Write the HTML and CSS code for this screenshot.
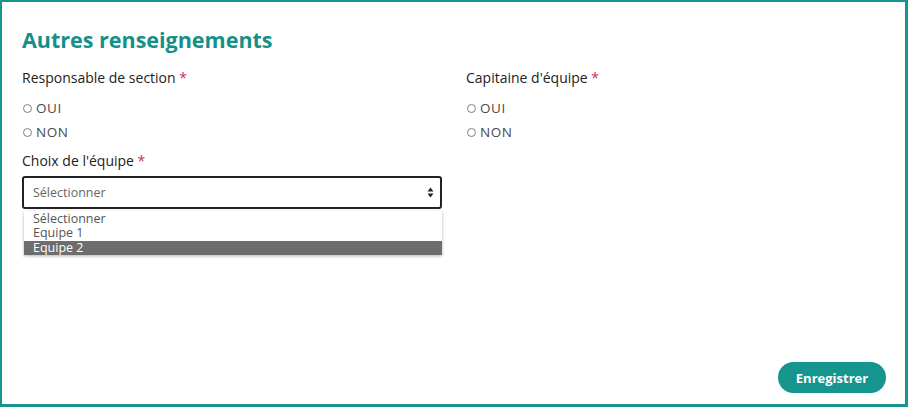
FILE: index.html
```html
<!DOCTYPE html>
<html lang="fr">
  <head>
    <meta charset="utf-8">
    <title>Autres renseignements</title>
    <link rel="stylesheet" href="styles.css">
  </head>
  <body>
    <div class="frame">
      <h1 class="title">Autres renseignements</h1>
      <div class="fields">
        <div class="field">
          <div class="label">Responsable de section <span class="req">*</span></div>
          <div class="choices">
            <label class="radio"><input type="radio" name="resp"> OUI</label>
            <label class="radio"><input type="radio" name="resp"> NON</label>
          </div>
        </div>
        <div class="field">
          <div class="label">Capitaine d'équipe <span class="req">*</span></div>
          <div class="choices">
            <label class="radio"><input type="radio" name="cap"> OUI</label>
            <label class="radio"><input type="radio" name="cap"> NON</label>
          </div>
        </div>
        <div class="field">
          <div class="label">Choix de l'équipe <span class="req">*</span></div>
          <div class="select">
            <span>Sélectionner</span>
            <svg class="arrows" width="7" height="11" viewBox="0 0 7 11"><path d="M3.5 0.5L6.5 4.5H0.5Z M3.5 10.5L6.5 6.5H0.5Z" fill="#222"/></svg>
          </div>
          <ul class="options">
            <li>Sélectionner</li>
            <li>Equipe 1</li>
            <li class="active">Equipe 2</li>
          </ul>
        </div>
      </div>
      <div class="footer">
        <button class="save">Enregistrer</button>
      </div>
    </div>
  </body>
</html>
```
FILE: styles.css
```css
html, body {
  margin: 0;
  padding: 0;
  height: 100%;
  background-color: #ffffff;
}

body {
  font-family: "Open Sans", "Liberation Sans", sans-serif;
  color: #222;
}

.frame {
  box-sizing: border-box;
  width: 908px;
  height: 407px;
  border: 3px solid #16958f;
  border-top-width: 2px;
  border-left-width: 2px;
  padding: 25px 19px 11px 20px;
  display: flex;
  flex-direction: column;
}

.title {
  margin: 0;
  font-size: 21.5px;
  line-height: 26px;
  font-weight: 700;
  color: #149089;
}

.fields {
  display: grid;
  grid-template-columns: 420px 420px;
  column-gap: 24px;
  margin-top: 16px;
}

.label {
  font-size: 14px;
  line-height: 18px;
  font-weight: 500;
  color: #222;
  margin-bottom: 6px;
}

.req {
  color: #d0314a;
}

.choices {
  padding-top: 6px;
}

.radio {
  display: flex;
  align-items: center;
  gap: 4px;
  font-size: 13.5px;
  line-height: 18px;
  letter-spacing: 0.6px;
  color: #4a4a4a;
  margin-bottom: 6px;
}

.radio:last-child {
  margin-bottom: 11px;
}

.radio input {
  appearance: none;
  margin: 0 0 0 1px;
  width: 9px;
  height: 9px;
  border: 1px solid #808080;
  border-radius: 50%;
}

.select {
  box-sizing: border-box;
  height: 33px;
  border: 2px solid #222;
  border-radius: 3px;
  display: flex;
  align-items: center;
  justify-content: space-between;
  padding: 0 6px 0 9px;
  font-size: 12.5px;
  color: #666;
}

.options {
  list-style: none;
  margin: 2px 0 0 2px;
  padding: 1px 0 0;
  box-shadow: 0 1px 3px rgba(0, 0, 0, 0.3);
  font-size: 12.5px;
  line-height: 14.4px;
  color: #555;
}

.options li {
  padding: 0 9px;
}

.options li.active {
  background-color: #6d6d6d;
  color: #fff;
}

.footer {
  margin-top: auto;
  display: flex;
  justify-content: flex-end;
}

.save {
  font-family: inherit;
  width: 108px;
  height: 31px;
  border: none;
  border-radius: 16px;
  background-color: #16958f;
  color: #fff;
  font-size: 13px;
  font-weight: 700;
}
```
